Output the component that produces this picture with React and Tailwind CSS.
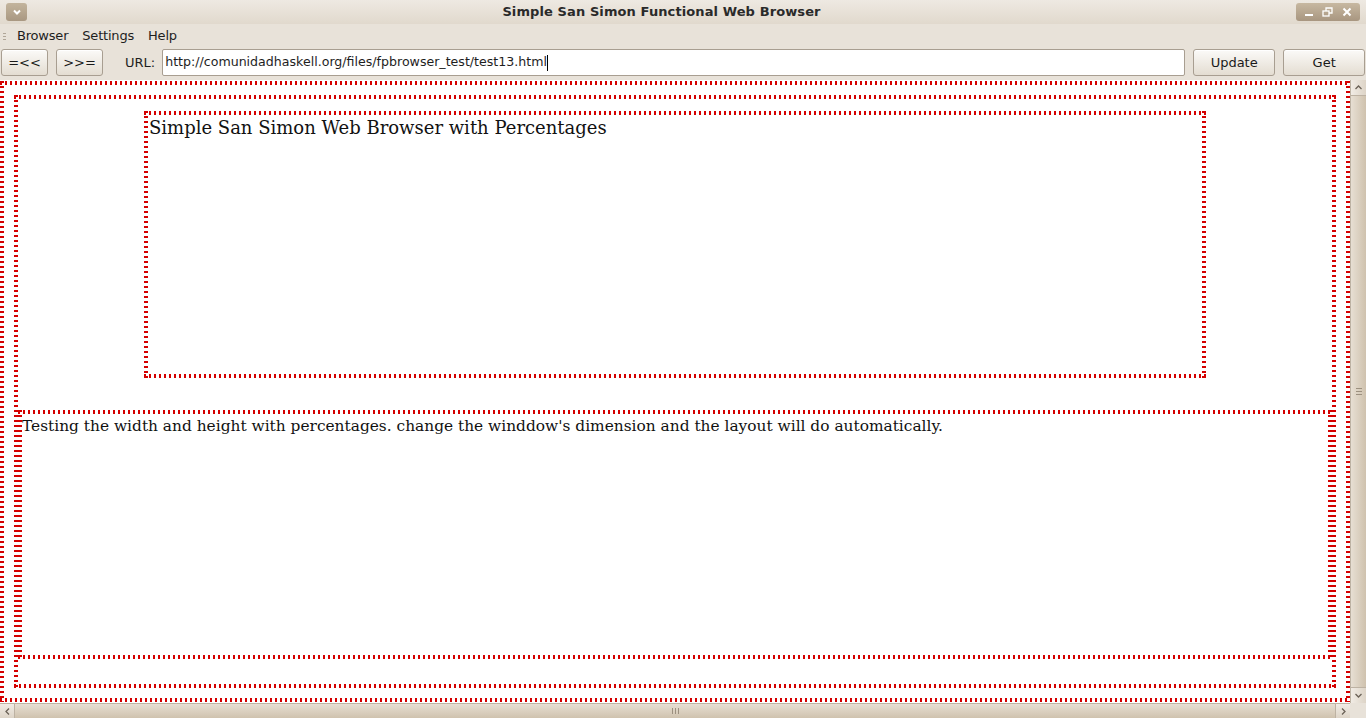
import React from "react";

const dotted =
  "[background:repeating-linear-gradient(90deg,#d40000_0_2px,transparent_2px_5px)_top/100%_4px_no-repeat,repeating-linear-gradient(90deg,#d40000_0_2px,transparent_2px_5px)_bottom/100%_4px_no-repeat,repeating-linear-gradient(180deg,#d40000_0_2px,transparent_2px_5px)_left/4px_100%_no-repeat,repeating-linear-gradient(180deg,#d40000_0_2px,transparent_2px_5px)_right/4px_100%_no-repeat] p-[4px]";

const btn =
  "h-[27px] rounded-[3px] border border-[#a89e91] bg-gradient-to-b from-[#fbfaf8] to-[#e4ddd2] text-[13px] text-[#1a1a1a] flex items-center justify-center shadow-[inset_0_1px_0_#fff]";

const Arrow = ({ d }) => (
  <svg width="9" height="9" viewBox="0 0 9 9" fill="none" stroke="#6b6257" strokeWidth="1.3">
    <path d={d} />
  </svg>
);

const App = () => {
  return (
    <div className="w-[1366px] h-[718px] flex flex-col bg-[#e8e2d9] overflow-hidden font-['DejaVu_Sans',sans-serif] select-none">
      {/* title bar */}
      <div className="h-[24px] flex items-center px-[6px] bg-gradient-to-b from-[#eee9e2] to-[#e1d9cd]">
        <div className="w-[21px] h-[18px] rounded-[3px] bg-gradient-to-b from-[#c3b49d] to-[#a99882] flex items-center justify-center">
          <svg width="10" height="7" viewBox="0 0 10 7" fill="none" stroke="#fff" strokeWidth="2">
            <path d="M2 1.5l3 3 3-3" />
          </svg>
        </div>
        <div className="flex-1 text-center text-[13px] font-bold text-[#2a2a2a] tracking-[0.1px]">
          Simple San Simon Functional Web Browser
        </div>
        <div className="w-[64px] h-[18px] rounded-[3px] bg-gradient-to-b from-[#c7b8a1] to-[#a89680] flex items-center justify-around px-[4px]">
          <svg width="10" height="10" viewBox="0 0 10 10">
            <rect x="1" y="7" width="8" height="2" fill="#fff" />
          </svg>
          <svg width="11" height="10" viewBox="0 0 11 10" fill="none" stroke="#fff" strokeWidth="1.3">
            <rect x="1" y="4" width="6" height="5" />
            <path d="M4 4V1h6v5H7" />
          </svg>
          <svg width="10" height="10" viewBox="0 0 10 10" fill="none" stroke="#fff" strokeWidth="2">
            <path d="M1.5 1.5l7 7M8.5 1.5l-7 7" />
          </svg>
        </div>
      </div>

      {/* menu bar */}
      <div className="h-[24px] flex items-center text-[13px] text-[#1e1e1e]">
        <div className="w-[4px] ml-[3px] flex flex-col gap-[2px]">
          <span className="block w-[3px] h-[1px] bg-[#b0a698]" />
          <span className="block w-[3px] h-[1px] bg-[#b0a698]" />
          <span className="block w-[3px] h-[1px] bg-[#b0a698]" />
        </div>
        <span className="ml-[10px] tracking-[-0.2px]">Browser</span>
        <span className="ml-[14px] tracking-[-0.2px]">Settings</span>
        <span className="ml-[14px] tracking-[-0.2px]">Help</span>
      </div>

      {/* toolbar */}
      <div className="h-[32px] flex items-start pt-[1px] text-[13px] text-[#1e1e1e]">
        <button className={`${btn} ml-[1px] w-[47px]`}>=&lt;&lt;</button>
        <button className={`${btn} ml-[8px] w-[47px]`}>&gt;&gt;=</button>
        <span className="ml-[22px] h-[27px] flex items-center">URL:</span>
        <div className="ml-[7px] w-[1023px] h-[27px] bg-white border border-[#a89e91] rounded-[2px] flex items-center pl-[2px] text-[12.6px]">
          <span>http://comunidadhaskell.org/files/fpbrowser_test/test13.html</span>
          <span className="w-[1px] h-[16px] bg-black" />
        </div>
        <button className={`${btn} ml-[8px] w-[82px]`}>Update</button>
        <button className={`${btn} ml-[8px] w-[82px]`}>Get</button>
      </div>

      {/* content + scrollbars */}
      <div className="flex-1 grid grid-cols-[1350px_16px] grid-rows-[623px_15px]">
        <div className="bg-white overflow-hidden pt-[1px] font-['DejaVu_Serif',serif] text-[#111]">
          <div className={`${dotted} h-[621px] px-[14px] py-[14px]`}>
            <div className={`${dotted} h-[593px] flex flex-col`}>
              <div className="pt-[12px] pl-[126px]">
                <div className={`${dotted} w-[1062px] h-[267px]`}>
                  <div className="text-[18px] leading-[20px] pl-[1px] pt-[3px] whitespace-nowrap">
                    Simple San Simon Web Browser with Percentages
                  </div>
                </div>
              </div>
              <div className={`${dotted} mt-[32px] h-[249px]`}>
                <div className="text-[15.4px] leading-[18px] pt-[3px] whitespace-nowrap">
                  Testing the width and height with percentages. change the winddow's dimension and the layout will do automatically.
                </div>
              </div>
            </div>
          </div>
        </div>

        {/* vertical scrollbar */}
        <div className="bg-[#d8cebf] flex flex-col border-l border-[#bdb2a3]">
          <div className="h-[16px] flex items-center justify-center bg-gradient-to-r from-[#f1ece5] to-[#ddd4c7] border-b border-[#bdb2a3]">
            <Arrow d="M1.5 6l3-3 3 3" />
          </div>
          <div className="flex-1 bg-gradient-to-r from-[#e7dfd3] to-[#cfc2ae] flex items-center justify-center">
            <div className="flex flex-col gap-[2px]">
              <span className="block w-[6px] h-[1px] bg-[#9c907f]" />
              <span className="block w-[6px] h-[1px] bg-[#9c907f]" />
              <span className="block w-[6px] h-[1px] bg-[#9c907f]" />
            </div>
          </div>
          <div className="h-[16px] flex items-center justify-center bg-gradient-to-r from-[#f1ece5] to-[#ddd4c7] border-t border-[#bdb2a3]">
            <Arrow d="M1.5 3l3 3 3-3" />
          </div>
        </div>

        {/* horizontal scrollbar */}
        <div className="bg-[#d8cebf] flex border-t border-[#bdb2a3]">
          <div className="w-[15px] flex items-center justify-center bg-gradient-to-b from-[#f1ece5] to-[#ddd4c7] border-r border-[#bdb2a3]">
            <Arrow d="M6 1.5l-3 3 3 3" />
          </div>
          <div className="flex-1 bg-gradient-to-b from-[#e7dfd3] to-[#cfc2ae] flex items-center justify-center">
            <div className="flex gap-[2px]">
              <span className="block w-[1px] h-[6px] bg-[#9c907f]" />
              <span className="block w-[1px] h-[6px] bg-[#9c907f]" />
              <span className="block w-[1px] h-[6px] bg-[#9c907f]" />
            </div>
          </div>
          <div className="w-[15px] flex items-center justify-center bg-gradient-to-b from-[#f1ece5] to-[#ddd4c7] border-l border-[#bdb2a3]">
            <Arrow d="M3 1.5l3 3-3 3" />
          </div>
        </div>
        <div className="bg-[#e8e2d9]" />
      </div>
    </div>
  );
};

export default App;
